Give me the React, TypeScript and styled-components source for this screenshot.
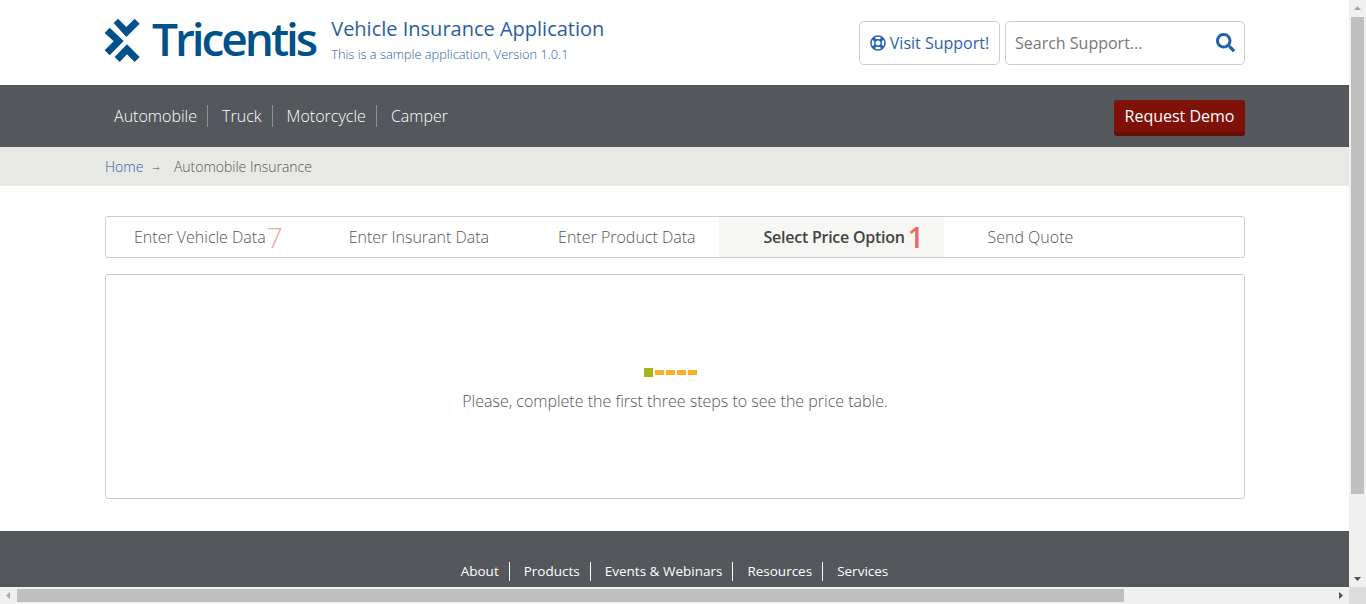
import React from "react";
import styled, { createGlobalStyle } from "styled-components";
import { FaRegLifeRing, FaSearch } from "react-icons/fa";

const Global = createGlobalStyle`
  html, body { margin: 0; padding: 0; height: 100%; overflow: hidden; background: #fff; }
  * { box-sizing: border-box; }
  body { font-family: "Open Sans", "Noto Sans", sans-serif; color: #555; }
`;

const Viewport = styled.div`
  width: 1349px;
  height: 587px;
  overflow: hidden;
`;
const Container = styled.div`
  width: 1140px;
  margin-left: 105px;
  display: flex;
  align-items: center;
  justify-content: space-between;
`;
const Header = styled.header`
  height: 85px;
  background: #fff;
  & > div { height: 85px; }
`;
const Brand = styled.div`
  display: flex;
  align-items: center;
`;
const LogoMark = styled.svg`
  width: 36px;
  height: 45px;
  margin-left: -1px;
  margin-bottom: 5px;
  flex: none;
`;
const LogoWord = styled.span`
  font-size: 46px;
  line-height: 50px;
  color: #00508a;
  font-weight: 600;
  letter-spacing: -3.05px;
  margin-left: 12px;
  margin-bottom: 9px;
`;
const Titles = styled.div`
  margin-left: 16px;
  margin-bottom: 9px;
  display: flex;
  flex-direction: column;
  gap: 4px;
`;
const AppTitle = styled.div`
  font-size: 20px;
  line-height: 27px;
  color: #2b5ca6;
`;
const AppSub = styled.div`
  font-size: 12.8px;
  line-height: 16px;
  font-weight: 300;
  color: #2b5ca6;
`;
const Tools = styled.div`
  display: flex;
  gap: 5px;
  margin-top: 0;
`;
const SupportButton = styled.a`
  width: 141px;
  height: 44px;
  border: 1px solid #ccc;
  border-radius: 5px;
  display: flex;
  align-items: center;
  justify-content: center;
  gap: 4px;
  font-size: 16px;
  color: #2b62b0;
`;
const SearchBox = styled.div`
  width: 240px;
  height: 44px;
  border: 1px solid #ccc;
  border-radius: 5px;
  display: flex;
  align-items: center;
  justify-content: space-between;
  padding: 0 9px;
  font-size: 16px;
  color: #777;
  svg { color: #2160ad; }
`;
const Nav = styled.nav`
  height: 62px;
  background: #54575c;
  & > div { height: 62px; }
`;
const NavList = styled.div`
  display: flex;
  align-items: center;
  padding-left: 9px;
`;
const NavItem = styled.a`
  font-size: 16px;
  font-weight: 300;
  letter-spacing: 0.02px;
  line-height: 22px;
  color: #fff;
  height: 22px;
  padding-right: 10px;
  margin-right: 14px;
  border-right: 1px solid #8d9094;
  &:last-child { border-right: 0; }
`;
const DemoButton = styled.a`
  width: 131px;
  height: 36px;
  margin-top: 4px;
  background: #7e1108;
  border-bottom: 4px solid #650d06;
  border-radius: 3px;
  color: #fff;
  font-size: 16px;
  display: flex;
  align-items: center;
  justify-content: center;
`;
const Crumbs = styled.div`
  height: 39px;
  background: #e8e8e4;
  & > div { height: 39px; justify-content: flex-start; font-size: 14px; font-weight: 300; }
`;
const CrumbLink = styled.a`
  color: #2b5ca6;
`;
const CrumbArrow = styled.span`
  font-size: 9px;
  color: #555;
  margin: 3px 14px 0 9px;
  font-family: "DejaVu Sans", sans-serif;
`;
const CrumbText = styled.span`
  color: #555;
  letter-spacing: -0.01px;
`;
const Main = styled.main`
  width: 1140px;
  margin-left: 105px;
  padding-top: 30px;
`;
const Tabs = styled.div`
  height: 42px;
  border: 1px solid #ccc;
  border-radius: 3px;
  display: flex;
  overflow: hidden;
`;
const Tab = styled.div<{ $active?: boolean; $left?: number; $right?: number }>`
  height: 40px;
  display: flex;
  align-items: center;
  padding: 0 ${(p) => p.$right ?? 24}px 0 ${(p) => p.$left ?? 44}px;
  font-size: 16px;
  font-weight: ${(p) => (p.$active ? 600 : 300)};
  letter-spacing: ${(p) => (p.$active ? "-0.25px" : "0")};
  color: ${(p) => (p.$active ? "#444" : "#555")};
  background: ${(p) => (p.$active ? "#f6f6f4" : "transparent")};
`;
const TabCount = styled.span<{ $active?: boolean }>`
  font-size: 28px;
  line-height: 30px;
  font-weight: ${(p) => (p.$active ? 600 : 300)};
  color: ${(p) => (p.$active ? "#e66a66" : "#eba9a5")};
  margin-left: ${(p) => (p.$active ? 3 : 1)}px;
`;
const Panel = styled.section`
  height: 225px;
  margin-top: 16px;
  border: 1px solid #ccc;
  border-radius: 3px;
  display: flex;
  flex-direction: column;
  align-items: center;
  padding-top: 93px;
`;
const Loader = styled.div`
  display: flex;
  align-items: center;
  gap: 2px;
  height: 9px;
  margin-right: 10px;
`;
const LoaderDot = styled.span<{ $on?: boolean }>`
  width: 9px;
  height: ${(p) => (p.$on ? "9px" : "5px")};
  background: ${(p) => (p.$on ? "#a2b614" : "#fcae27")};
`;
const PanelText = styled.p`
  margin: 13px 0 0;
  font-size: 16px;
  line-height: 22px;
  font-weight: 300;
  color: #555;
`;
const Footer = styled.footer`
  margin-top: 32px;
  height: 120px;
  background: #54575c;
  display: flex;
  justify-content: center;
  align-items: flex-start;
  padding-top: 31px;
`;
const FooterLink = styled.a`
  font-size: 13.5px;
  line-height: 19px;
  color: #fff;
  padding: 0 10px 0 14px;
  border-right: 1px solid #fff;
  &:first-child { padding-left: 0; }
  &:last-child { border-right: 0; padding-right: 0; }
`;
const VTrack = styled.div`
  position: fixed;
  top: 0;
  right: 0;
  width: 17px;
  height: 587px;
  background: #f0f0f0;
`;
const VThumb = styled.div`
  position: absolute;
  top: 17px;
  left: 2px;
  width: 13px;
  height: 477px;
  background: #bfbfbf;
`;
const HTrack = styled.div`
  position: fixed;
  left: 0;
  bottom: 0;
  width: 1349px;
  height: 17px;
  background: #f0f0f0;
`;
const HThumb = styled.div`
  position: absolute;
  top: 2px;
  left: 17px;
  width: 1107px;
  height: 13px;
  background: #bfbfbf;
`;
const Corner = styled.div`
  position: fixed;
  right: 0;
  bottom: 0;
  width: 17px;
  height: 17px;
  background: #dcdcdc;
`;
const Arrow = styled.svg<{ $x: number; $y: number }>`
  position: absolute;
  left: ${(p) => p.$x}px;
  top: ${(p) => p.$y}px;
  width: 17px;
  height: 17px;
`;

export default function App() {
  return (
    <>
      <Global />
      <Viewport>
        <Header>
          <Container>
            <Brand>
              <LogoMark viewBox="13 24 108 133" fill="#00508a">
                <polygon points="42,38 55,25 80,50 105,25 120,40 80,80" />
                <polygon points="15,68 30,52 72,92 30,135 15,120 42,93" />
                <polygon points="45,140 82,102 120,140 105,155 82,132 60,155" />
              </LogoMark>
              <LogoWord>Tricentis</LogoWord>
              <Titles>
                <AppTitle>Vehicle Insurance Application</AppTitle>
                <AppSub>This is a sample application, Version 1.0.1</AppSub>
              </Titles>
            </Brand>
            <Tools>
              <SupportButton>
                <FaRegLifeRing size={16} />
                Visit Support!
              </SupportButton>
              <SearchBox>
                Search Support...
                <FaSearch size={19} />
              </SearchBox>
            </Tools>
          </Container>
        </Header>
        <Nav>
          <Container>
            <NavList>
              <NavItem>Automobile</NavItem>
              <NavItem>Truck</NavItem>
              <NavItem>Motorcycle</NavItem>
              <NavItem>Camper</NavItem>
            </NavList>
            <DemoButton>Request Demo</DemoButton>
          </Container>
        </Nav>
        <Crumbs>
          <Container>
            <CrumbLink>Home</CrumbLink>
            <CrumbArrow>→</CrumbArrow>
            <CrumbText>Automobile Insurance</CrumbText>
          </Container>
        </Crumbs>
        <Main>
          <Tabs>
            <Tab $left={28} $right={22}>
              Enter Vehicle Data<TabCount>7</TabCount>
            </Tab>
            <Tab $right={25}>Enter Insurant Data</Tab>
            <Tab $right={23}>Enter Product Data</Tab>
            <Tab $active $left={45} $right={21}>
              Select Price Option<TabCount $active>1</TabCount>
            </Tab>
            <Tab $left={43}>Send Quote</Tab>
          </Tabs>
          <Panel>
            <Loader>
              <LoaderDot $on />
              <LoaderDot />
              <LoaderDot />
              <LoaderDot />
              <LoaderDot />
            </Loader>
            <PanelText>Please, complete the first three steps to see the price table.</PanelText>
          </Panel>
        </Main>
        <Footer>
          <FooterLink>About</FooterLink>
          <FooterLink>Products</FooterLink>
          <FooterLink>Events &amp; Webinars</FooterLink>
          <FooterLink>Resources</FooterLink>
          <FooterLink>Services</FooterLink>
        </Footer>
      </Viewport>
      <VTrack>
        <Arrow $x={0} $y={0} viewBox="0 0 17 17" fill="#a6a6a6"><polygon points="5,10 8.5,6 12,10" /></Arrow>
        <VThumb />
        <Arrow $x={0} $y={570} viewBox="0 0 17 17" fill="#505050"><polygon points="5,7 12,7 8.5,11" /></Arrow>
      </VTrack>
      <HTrack>
        <Arrow $x={0} $y={0} viewBox="0 0 17 17" fill="#a6a6a6"><polygon points="10,5 10,12 6,8.5" /></Arrow>
        <HThumb />
        <Arrow $x={1332} $y={0} viewBox="0 0 17 17" fill="#505050"><polygon points="7,5 11,8.5 7,12" /></Arrow>
      </HTrack>
      <Corner />
    </>
  );
}
